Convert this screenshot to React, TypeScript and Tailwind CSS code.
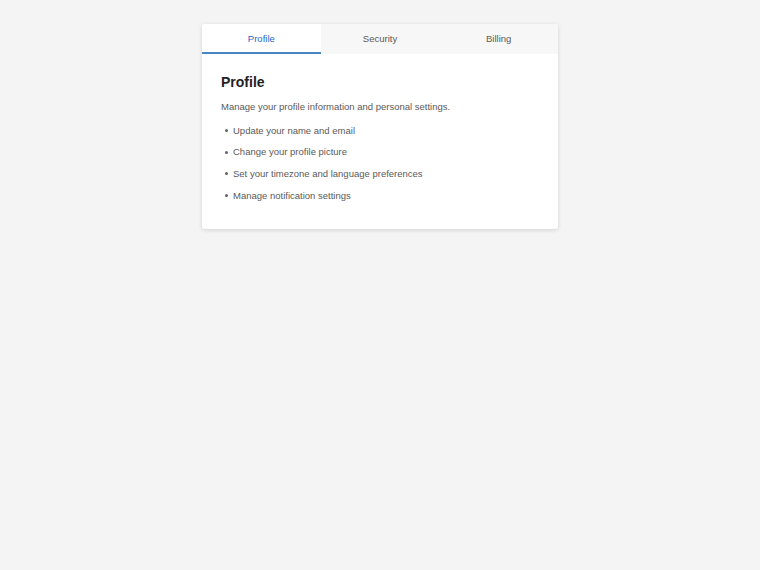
import React, { useState } from 'react';

const tabs = ['Profile', 'Security', 'Billing'] as const;

const content: Record<(typeof tabs)[number], { title: string; intro: string; items: string[] }> = {
  Profile: {
    title: 'Profile',
    intro: 'Manage your profile information and personal settings.',
    items: [
      'Update your name and email',
      'Change your profile picture',
      'Set your timezone and language preferences',
      'Manage notification settings',
    ],
  },
  Security: {
    title: 'Security',
    intro: 'Keep your account safe and secure.',
    items: ['Change your password', 'Enable two-factor authentication', 'Review active sessions'],
  },
  Billing: {
    title: 'Billing',
    intro: 'Manage your plan and payment details.',
    items: ['View invoices', 'Update payment method', 'Change subscription plan'],
  },
};

export default function App() {
  const [active, setActive] = useState<(typeof tabs)[number]>('Profile');
  const data = content[active];

  return (
    <div className="min-h-[570px] bg-[#f4f4f4] pt-6 font-['Liberation_Sans',Arial,sans-serif]">
      <div className="mx-auto w-[356px] overflow-hidden rounded-[3px] bg-white shadow-[0_1px_4px_rgba(0,0,0,0.14)]">
        <div className="flex border-b-2 border-[#e3e3e3]">
          {tabs.map((t) => (
            <button
              key={t}
              onClick={() => setActive(t)}
              className={`-mb-[2px] h-[30px] flex-1 border-b-2 pt-[2px] text-[9.5px] ${
                active === t
                  ? 'border-[#4a86c4] bg-white text-[#2368c4]'
                  : 'border-transparent bg-[#f7f7f7] text-[#5a5a5a]'
              }`}
            >
              {t}
            </button>
          ))}
        </div>
        <div className="px-[19px] pt-[18px] pb-[22px]">
          <h2 className="mb-[4px] text-[14px] leading-[20px] font-bold text-[#222]">{data.title}</h2>
          <p className="text-[9.5px] leading-[21.7px] text-[#5a5a5a]">{data.intro}</p>
          <ul className="mt-[2px] text-[9.5px] leading-[21.7px] text-[#5a5a5a]">
            {data.items.map((i) => (
              <li key={i} className="flex items-center">
                <span className="ml-[4px] mr-[5px] h-[3px] w-[3px] rounded-full bg-[#666]" />
                {i}
              </li>
            ))}
          </ul>
        </div>
      </div>
    </div>
  );
}
